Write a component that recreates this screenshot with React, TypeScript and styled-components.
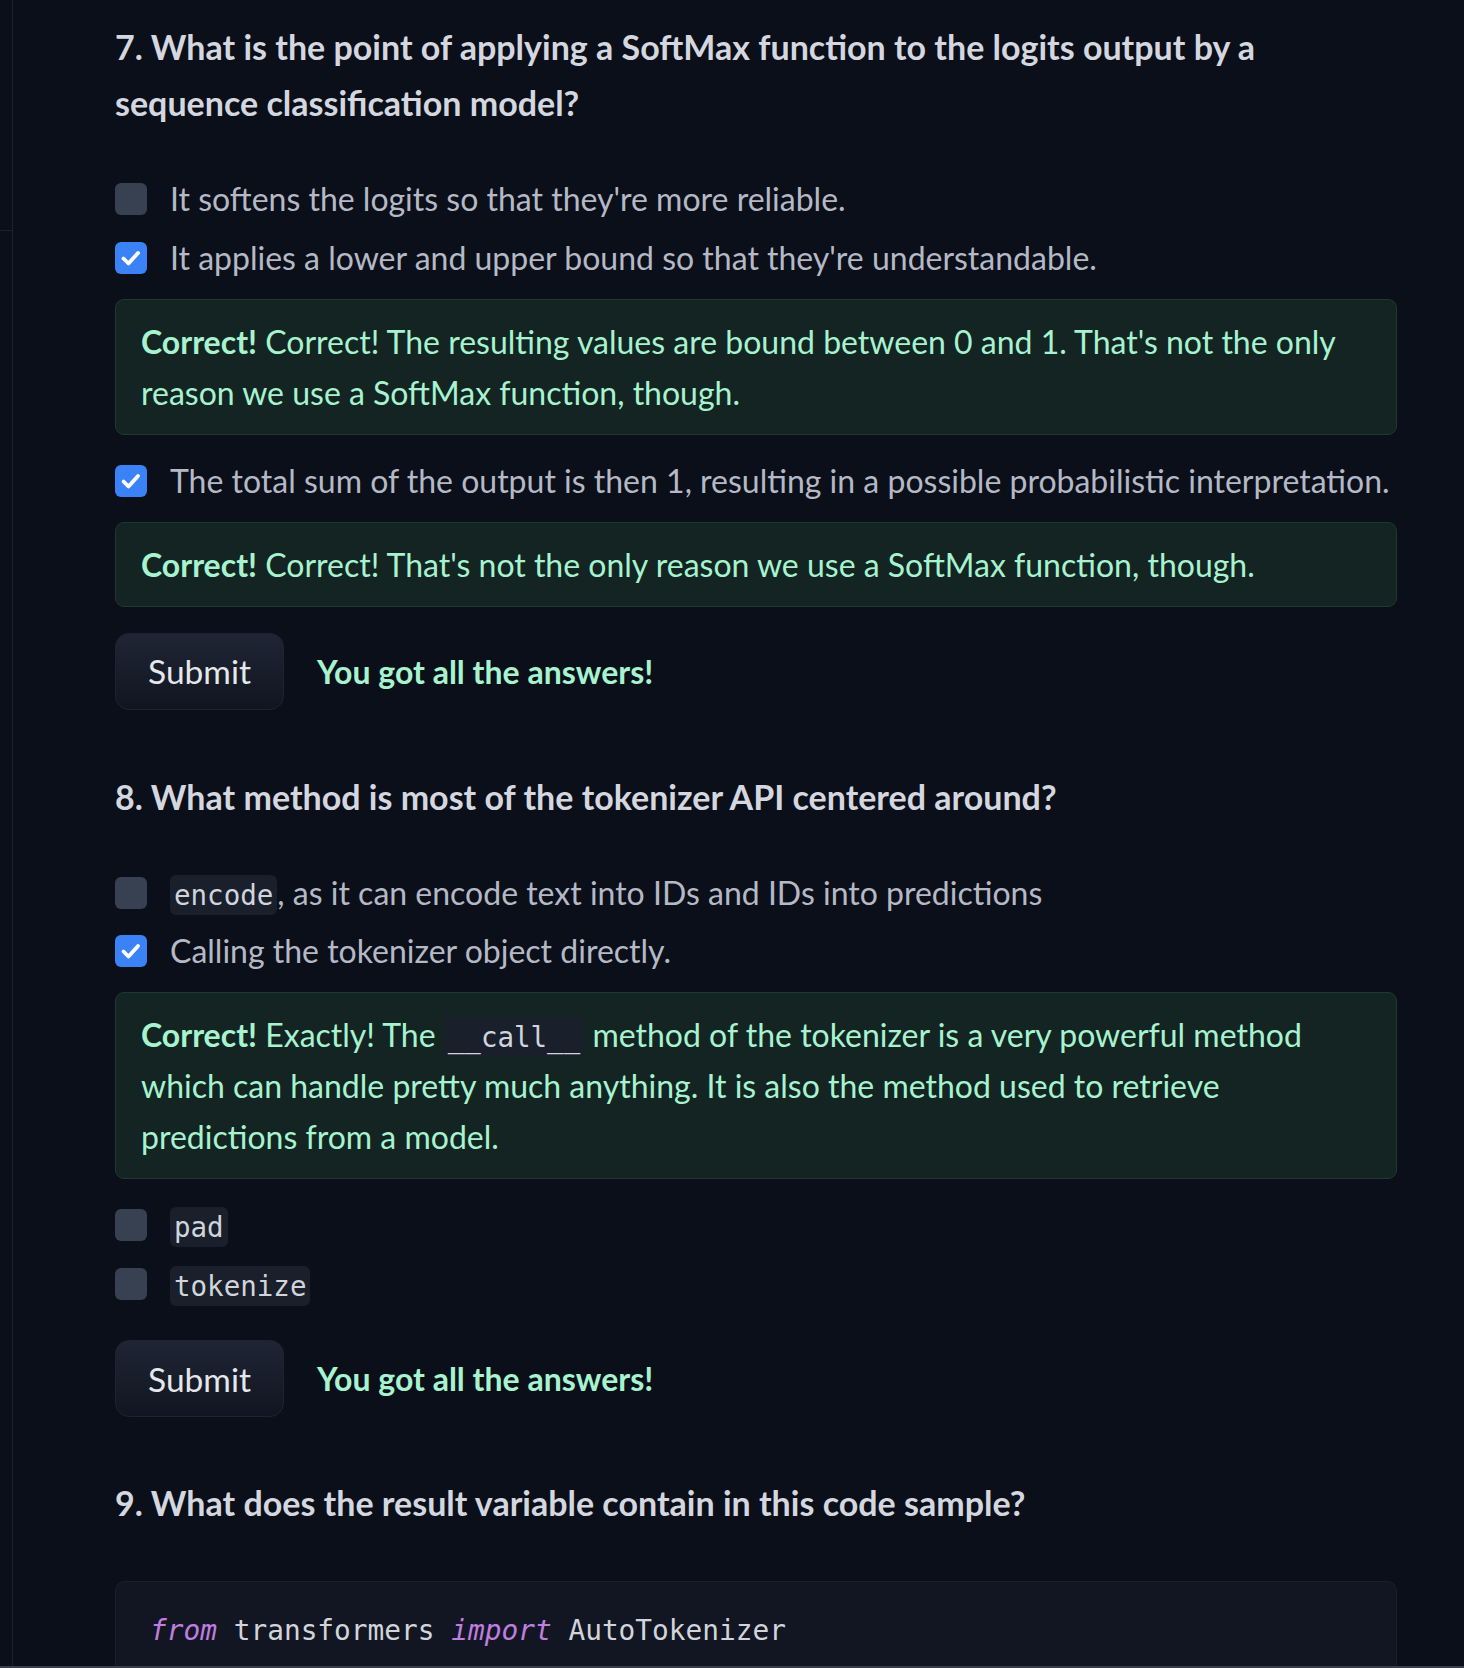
import React from "react";
import styled, { createGlobalStyle } from "styled-components";

const Global = createGlobalStyle`
  html, body { margin: 0; padding: 0; background: #0b0f19; }
  body { font-family: Lato, "Noto Sans", sans-serif; }
  * { box-sizing: border-box; }
`;

const Page = styled.div`
  display: flex;
  height: 1668px;
  overflow: hidden;
  position: relative;
  background: #0b0f19;
`;

const Sidebar = styled.aside`
  width: 13px;
  flex: none;
  border-right: 1px solid #1c2130;
  display: flex;
  flex-direction: column;
`;

const SidebarTop = styled.div`
  height: 231px;
  border-bottom: 1px solid #1c2130;
`;

const Main = styled.main`
  flex: 1;
  padding: 19px 67px 0 102px;
  display: flex;
  flex-direction: column;
`;

const Title = styled.h3<{ $top?: number }>`
  margin: ${(p) => p.$top ?? 0}px 0 0;
  font-family: Lato, "Noto Sans", sans-serif;
  font-weight: 700;
  font-size: 34px;
  line-height: 56px;
  color: #d4d7df;
`;

const Options = styled.div`
  margin-top: 42px;
  display: flex;
  flex-direction: column;
`;

const Row = styled.label`
  display: flex;
  align-items: flex-start;
  gap: 23px;
  margin-bottom: 7.5px;
  font-size: 32px;
  line-height: 51px;
  color: #b5b9c6;
`;

const Box = styled.span<{ $checked?: boolean }>`
  flex: none;
  width: 32px;
  height: 32px;
  margin-top: 10px;
  border-radius: 6px;
  background: ${(p) => (p.$checked ? "#3b82f6" : "#374151")};
  display: flex;
  align-items: center;
  justify-content: center;
`;

const Code = styled.code`
  font-family: "DejaVu Sans Mono", "Liberation Mono", monospace;
  font-size: 27.5px;
  line-height: 1;
  background: #1a1f2c;
  color: #d1d5db;
  border-radius: 6px;
  padding: 4px 4px;
`;

const Feedback = styled.div`
  margin: 8.5px 0 20px;
  padding: 16px 25px;
  border: 1px solid #1c3a31;
  background: #132422;
  border-radius: 9px;
  font-size: 32px;
  line-height: 51px;
  color: #a7f3d0;
  b { font-weight: 700; }
`;

const SubmitRow = styled.div<{ $top: number }>`
  margin-top: ${(p) => p.$top}px;
  display: flex;
  align-items: center;
  gap: 33px;
`;

const SubmitButton = styled.button`
  width: 169px;
  height: 77px;
  border-radius: 14px;
  border: 1px solid #1d2333;
  background: linear-gradient(#1f2534, #111521);
  color: #e5e7eb;
  font-family: Lato, "Noto Sans", sans-serif;
  font-size: 33.5px;
`;

const Success = styled.span`
  font-size: 32px;
  font-weight: 700;
  color: #a7f3d0;
`;

const CodeBlock = styled.pre`
  margin: 50px 0 0;
  padding: 32px 34px;
  border: 1px solid #1a1f2d;
  border-radius: 10px;
  background: #121622;
  font-family: "DejaVu Sans Mono", "Liberation Mono", monospace;
  font-size: 27.8px;
  line-height: 34px;
  color: #d1d5db;
  i { color: #c07ee0; }
`;

const BottomBar = styled.div`
  position: absolute;
  left: 0;
  right: 0;
  bottom: 0;
  height: 2px;
  background: #3a3f4b;
`;

const Check = () => (
  <svg width="24" height="24" viewBox="0 0 24 24">
    <polyline points="4.5,12.5 9.5,17.5 19,7" fill="none" stroke="#fff" strokeWidth="3.8" strokeLinecap="round" strokeLinejoin="round" />
  </svg>
);

const Option: React.FC<{ checked?: boolean; children: React.ReactNode }> = ({ checked, children }) => (
  <Row>
    <Box $checked={checked}>{checked && <Check />}</Box>
    <span>{children}</span>
  </Row>
);

export default function App() {
  return (
    <>
      <Global />
      <Page>
        <Sidebar>
          <SidebarTop />
        </Sidebar>
        <Main>
          <Title>7. What is the point of applying a SoftMax function to the logits output by a sequence classification model?</Title>
          <Options>
            <Option>It softens the logits so that they're more reliable.</Option>
            <Option checked>It applies a lower and upper bound so that they're understandable.</Option>
            <Feedback>
              <b>Correct!</b> Correct! The resulting values are bound between 0 and 1. That's not the only reason we use a SoftMax function, though.
            </Feedback>
            <Option checked>The total sum of the output is then 1, resulting in a possible probabilistic interpretation.</Option>
            <Feedback>
              <b>Correct!</b> Correct! That's not the only reason we use a SoftMax function, though.
            </Feedback>
          </Options>
          <SubmitRow $top={6}>
            <SubmitButton>Submit</SubmitButton>
            <Success>You got all the answers!</Success>
          </SubmitRow>

          <Title $top={59}>8. What method is most of the tokenizer API centered around?</Title>
          <Options>
            <Option><Code>encode</Code>, as it can encode text into IDs and IDs into predictions</Option>
            <Option checked>Calling the tokenizer object directly.</Option>
            <Feedback>
              <b>Correct!</b> Exactly! The <Code>__call__</Code> method of the tokenizer is a very powerful method which can handle pretty much anything. It is also the method used to retrieve predictions from a model.
            </Feedback>
            <Option><Code>pad</Code></Option>
            <Option><Code>tokenize</Code></Option>
          </Options>
          <SubmitRow $top={24}>
            <SubmitButton>Submit</SubmitButton>
            <Success>You got all the answers!</Success>
          </SubmitRow>

          <Title $top={58}>9. What does the result variable contain in this code sample?</Title>
          <CodeBlock>
            <i>from</i> transformers <i>import</i> AutoTokenizer
          </CodeBlock>
        </Main>
        <BottomBar />
      </Page>
    </>
  );
}
